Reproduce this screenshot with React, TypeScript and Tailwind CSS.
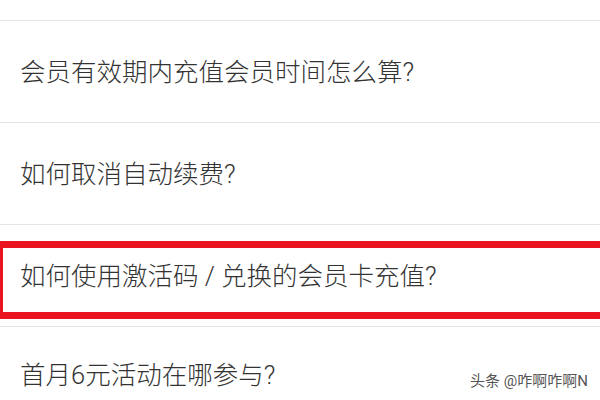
import React from "react";

const font = { fontFamily: 'Roboto, "Noto Sans CJK SC", "Noto Sans", sans-serif' };

export default function App() {
  return (
    <div
      className="relative w-[600px] h-[400px] overflow-hidden bg-white text-[#333333]"
      style={font}
    >
      <div className="h-[20px]" />
      <div className="h-[102px] border-t border-[#e5e5e5] flex items-center pl-5 text-[25.5px] leading-[36px] font-light">
        会员有效期内充值会员时间怎么算?
      </div>
      <div className="h-[102px] border-t border-[#e5e5e5] flex items-center pl-5 text-[25.5px] leading-[36px] font-light">
        如何取消自动续费?
      </div>
      <div className="h-[102px] border-t border-[#e5e5e5] pt-[16px]">
        <div className="h-[78px] mr-[-10px] border-l-[3px] border-y-[7px] border-[#e8141f] flex items-center pl-[17px] pb-[8px] text-[25.5px] leading-[36px] font-light">
          如何使用激活码 / 兑换的会员卡充值?
        </div>
      </div>
      <div className="border-t border-[#e5e5e5] pt-[30px] pl-5 text-[25.5px] leading-[36px] font-light">
        首月6元活动在哪参与?
      </div>
      <div className="absolute right-[12px] bottom-[9px] text-[15px] leading-[20px] text-[#555555] [text-shadow:0_0_2px_#ffffff]">
        头条 @咋啊咋啊N
      </div>
    </div>
  );
}
